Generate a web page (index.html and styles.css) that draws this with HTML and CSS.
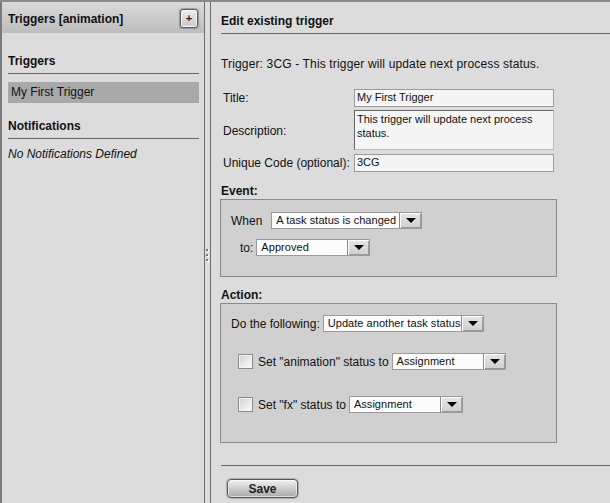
FILE: index.html
```html
<!DOCTYPE html>
<html>
<head>
<meta charset="utf-8">
<link rel="stylesheet" href="styles.css">
</head>
<body>
<div class="app">
  <aside class="left">
    <div class="lhead">
      <span class="lhead-title">Triggers [animation]</span>
      <span class="plus">+</span>
    </div>
    <div class="lbody">
      <h3 class="sec first">Triggers</h3>
      <div class="item sel">My First Trigger</div>
      <h3 class="sec">Notifications</h3>
      <div class="empty">No Notifications Defined</div>
    </div>
  </aside>
  <div class="splitter">
    <div class="grip"><i></i><i></i><i></i></div>
  </div>
  <main class="right">
    <div class="rhead">Edit existing trigger</div>
    <div class="content">
      <p class="intro">Trigger: 3CG - This trigger will update next process status.</p>
      <div class="form">
        <label class="lbl">Title:</label>
        <div class="input">My First Trigger</div>
        <label class="lbl">Description:</label>
        <div class="textarea">This trigger will update next process status.</div>
        <label class="lbl">Unique Code (optional):</label>
        <div class="input">3CG</div>
      </div>

      <div class="sub">Event:</div>
      <div class="box event">
        <div class="row when">
          <span class="rl">When</span>
          <div class="select w150"><span class="sv">A task status is changed</span><span class="arrow"></span></div>
        </div>
        <div class="row to">
          <span class="rl">to:</span>
          <div class="select w114"><span class="sv">Approved</span><span class="arrow"></span></div>
        </div>
      </div>

      <div class="sub action-sub">Action:</div>
      <div class="box action">
        <div class="row">
          <span class="rl">Do the following:</span>
          <div class="select w160"><span class="sv">Update another task status</span><span class="arrow"></span></div>
        </div>
        <div class="row chk r1">
          <span class="checkbox"></span>
          <span class="rl">Set "animation" status to</span>
          <div class="select w113"><span class="sv">Assignment</span><span class="arrow"></span></div>
        </div>
        <div class="row chk r2">
          <span class="checkbox"></span>
          <span class="rl">Set "fx" status to</span>
          <div class="select w113"><span class="sv">Assignment</span><span class="arrow"></span></div>
        </div>
      </div>
    </div>
    <div class="footer">
      <button class="save">Save</button>
    </div>
  </main>
</div>
</body>
</html>
```

FILE: styles.css
```css
* { box-sizing: border-box; }
html, body {
  margin: 0;
  padding: 0;
  width: 610px;
  height: 503px;
  overflow: hidden;
  background: #dcdcdc;
  font-family: "Liberation Sans", Arial, sans-serif;
  font-size: 12px;
  color: #111;
}
.app {
  display: flex;
  height: 503px;
  border-top: 2px solid #8a8a8a;
}
.left {
  width: 205px;
  flex: none;
  border-left: 2px solid #7a7a7a;
  border-right: 1px solid #6e6e6e;
  background: #dcdcdc;
}
.lhead {
  height: 31px;
  display: flex;
  align-items: center;
  justify-content: space-between;
  padding: 3px 6px 0 6px;
  background: linear-gradient(#dadada, #bdbdbd);
}
.lhead-title {
  font-weight: bold;
  font-size: 12px;
}
.plus {
  width: 18px;
  height: 19px;
  border: 1px solid #5a5a5a;
  border-radius: 3px;
  background: linear-gradient(#f0f0f0, #c8c8c8);
  box-shadow: 0 0 1px 1px rgba(0,0,0,0.25), inset 0 0 0 1px #fafafa;
  font-size: 11px;
  font-weight: bold;
  line-height: 16px;
  text-align: center;
  color: #222;
  margin-top: -2px;
}
.lbody {
  padding: 0 5px 0 6px;
}
.sec {
  margin: 0;
  height: 20px;
  line-height: 14px;
  font-size: 12px;
  font-weight: bold;
  border-bottom: 1px solid #666;
}
.sec.first { margin-top: 21px; }
.item {
  margin-top: 8px;
  height: 21px;
  line-height: 21px;
  padding-left: 3px;
}
.item.sel { background: #a9a9a9; }
.item + .sec { margin-top: 16px; }
.empty {
  margin-top: 8px;
  line-height: 14px;
  font-style: italic;
}
.splitter {
  width: 6px;
  flex: none;
  border-right: 1px solid #6e6e6e;
  position: relative;
}
.grip {
  position: absolute;
  left: 1px;
  top: 247px;
  display: flex;
  flex-direction: column;
  gap: 3px;
}
.grip i {
  display: block;
  width: 2px;
  height: 2px;
  background: #777;
  box-shadow: 1px 1px 0 #fff;
}
.right {
  flex: 1;
  display: flex;
  flex-direction: column;
}
.rhead {
  margin-left: 10px;
  height: 32px;
  padding-top: 12px;
  line-height: 14px;
  font-weight: bold;
  border-bottom: 1px solid #666;
}
.content {
  padding-left: 10px;
  width: 356px;
}
.intro {
  margin: 23px 0 0 0;
  line-height: 14px;
  letter-spacing: 0.15px;
}
.form {
  margin-top: 18px;
  display: grid;
  grid-template-columns: 133px 200px;
  row-gap: 3px;
  align-items: center;
}
.lbl {
  padding-left: 2px;
  line-height: 14px;
}
.input {
  height: 18px;
  border: 1px solid #9a9a9a;
  background: #f5f5f5;
  font-size: 11px;
  line-height: 15px;
  padding-left: 2px;
}
.textarea {
  height: 40px;
  border: 1px solid #bdbdbd;
  border-top-color: #666;
  border-left-color: #666;
  background: #f5f5f5;
  font-size: 11px;
  line-height: 14px;
  padding: 1px 2px 0 2px;
  margin-bottom: 1px;
}
.sub {
  margin-top: 12px;
  line-height: 14px;
  font-weight: bold;
}
.sub.action-sub { margin-top: 11px; }
.box {
  margin-top: 1px;
  width: 337px;
  margin-left: -1px;
  border: 1px solid #8a8a8a;
  background: #d0d0d0;
}
.event {
  height: 78px;
  padding: 12px 0 0 10px;
}
.action {
  height: 140px;
  padding: 11px 0 0 10px;
}
.row {
  display: flex;
  align-items: center;
  height: 17px;
}
.event .row.when .rl { margin-right: 9px; }
.event .row.to {
  margin-top: 10px;
  padding-left: 9px;
}
.event .row.to .rl { margin-right: 3px; }
.action .row .rl { margin-right: 3px; }
.row.chk { padding-left: 7px; }
.row.chk .checkbox { margin-right: 5px; }
.row.r1 { margin-top: 21px; }
.row.r2 { margin-top: 26px; }
.select {
  height: 17px;
  display: flex;
  border: 1px solid #9a9a9a;
  background: #fcfcfc;
}
.sv {
  flex: 1;
  font-size: 11px;
  line-height: 15px;
  padding-left: 4px;
  white-space: nowrap;
  overflow: hidden;
  letter-spacing: 0.05px;
}
.arrow {
  width: 22px;
  flex: none;
  border: 1px solid #8a8a8a;
  border-top: 0;
  border-bottom: 0;
  border-right: 0;
  background: linear-gradient(#e6e6e6, #cfcfcf);
  box-shadow: inset 1px 1px 0 #fff, inset -1px -1px 0 #9a9a9a;
  position: relative;
}
.arrow::after {
  content: "";
  position: absolute;
  left: 6px;
  top: 5px;
  border-left: 5px solid transparent;
  border-right: 5px solid transparent;
  border-top: 5px solid #000;
}
.w150 { width: 151px; }
.w114 { width: 114px; }
.w160 { width: 161px; }
.w113 { width: 114px; }
.checkbox {
  width: 15px;
  height: 15px;
  flex: none;
  border: 1px solid #8a8a8a;
  background: linear-gradient(135deg, #cfcfcf, #ffffff);
  box-shadow: inset 0 0 0 1px #f4f4f4;
}
.footer {
  margin-left: 10px;
  margin-top: 22px;
  border-top: 1px solid #666;
  padding-top: 13px;
}
.save {
  margin-left: 6px;
  width: 71px;
  height: 19px;
  border: 1px solid #555;
  border-radius: 4px;
  background: linear-gradient(#f2f2f2, #c9c9c9 55%, #a9a9a9);
  box-shadow: 0 0 1px 1px rgba(0,0,0,0.2), inset 0 0 0 1px rgba(255,255,255,0.6);
  font-family: "Liberation Sans", Arial, sans-serif;
  font-size: 12px;
  font-weight: bold;
  color: #222;
  padding: 0;
  line-height: 16px;
}
```
